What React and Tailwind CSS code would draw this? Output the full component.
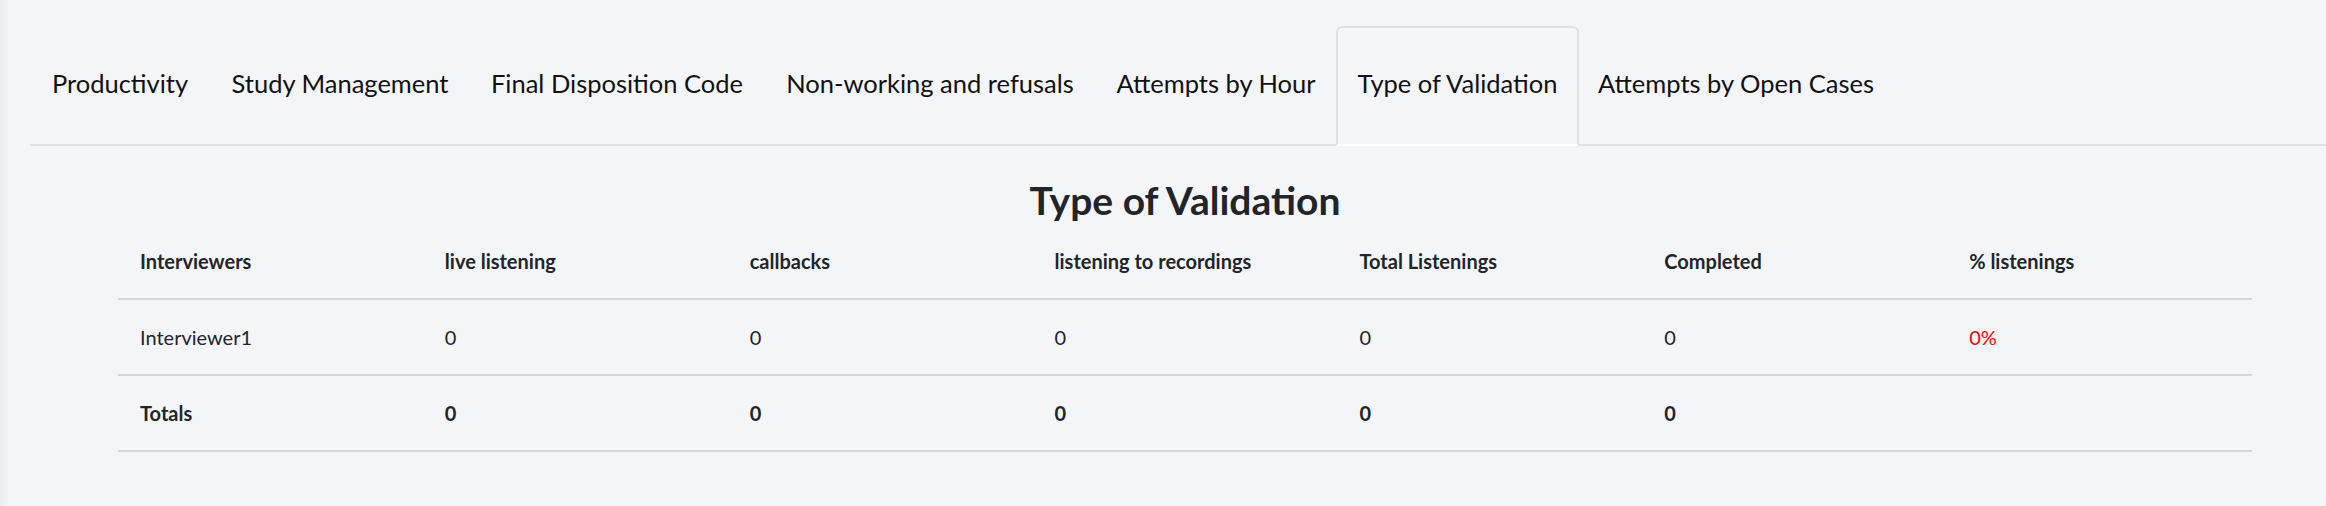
import { Fragment, useState } from 'react';

const tabs = [
    { label: 'Productivity', w: 'w-[180px]' },
    { label: 'Study Management', w: 'w-[260px]' },
    { label: 'Final Disposition Code', w: 'w-[294px]' },
    { label: 'Non-working and refusals', w: 'w-[332px]' },
    { label: 'Attempts by Hour', w: 'w-[240px]' },
    { label: 'Type of Validation', w: 'w-[243px]' },
    { label: 'Attempts by Open Cases', w: 'w-[314px]' },
];

const columns = [
    'Interviewers',
    'live listening',
    'callbacks',
    'listening to recordings',
    'Total Listenings',
    'Completed',
    '% listenings',
];

const rows = [
    { name: 'Interviewer1', values: ['0', '0', '0', '0', '0'], pct: '0%' },
];

const totals = ['0', '0', '0', '0', '0'];

function Cell({ children, className = '' }) {
    return (
        <div className={`h-[76px] flex items-center pl-[22px] border-b-2 border-[#d5d6da] ${className}`}>
            {children}
        </div>
    );
}

export default function App() {
    const [active, setActive] = useState('Type of Validation');

    return (
        <div className="min-h-[506px] w-full bg-[#f4f5f9] shadow-[inset_14px_0_12px_-10px_rgba(0,0,0,0.05)] font-['Lato','Noto_Sans',sans-serif] text-[#212529]">
            <div className="pl-[30px] pt-[26px]">
                <nav className="flex border-b-2 border-[#dee0e5]">
                    {tabs.map((tab) => {
                        const isActive = tab.label === active;
                        return (
                            <button
                                key={tab.label}
                                onClick={() => setActive(tab.label)}
                                className={`${tab.w} h-[120px] -mb-[2px] pb-[6px] flex items-center justify-center text-[25.5px] text-[#111] border-2 rounded-t-[6px] ${
                                    isActive
                                        ? 'border-[#dee0e5] border-b-white'
                                        : 'border-transparent'
                                }`}
                            >
                                {tab.label}
                            </button>
                        );
                    })}
                </nav>

                <div className="ml-[88px] w-[2134px]">
                    <h2 className="mt-[31px] text-center text-[39px] leading-[1.2] font-bold">
                        {active}
                    </h2>

                    <div className="grid grid-cols-7 text-[20px]">
                        {columns.map((col) => (
                            <Cell key={col} className="font-bold">
                                {col}
                            </Cell>
                        ))}

                        {rows.map((row) => (
                            <Fragment key={row.name}>
                                <Cell>{row.name}</Cell>
                                {row.values.map((v, i) => (
                                    <Cell key={i}>{v}</Cell>
                                ))}
                                <Cell className="text-[#ff0000]">{row.pct}</Cell>
                            </Fragment>
                        ))}

                        <Cell className="font-bold">Totals</Cell>
                        {totals.map((v, i) => (
                            <Cell key={'t' + i} className="font-bold">
                                {v}
                            </Cell>
                        ))}
                        <Cell />
                    </div>
                </div>
            </div>
        </div>
    );
}
